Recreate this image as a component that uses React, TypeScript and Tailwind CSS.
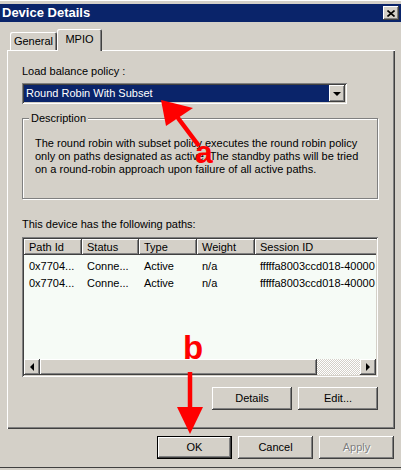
import React from "react";

const raised =
  "shadow-[inset_-1px_-1px_#404040,inset_1px_1px_#ffffff,inset_-2px_-2px_#808080,inset_2px_2px_#d4d0c8]";
const sunken =
  "shadow-[inset_1px_1px_#808080,inset_-1px_-1px_#ffffff,inset_2px_2px_#404040,inset_-2px_-2px_#d4d0c8]";

const columns = [
  { name: "Path Id", w: "w-[58px]" },
  { name: "Status", w: "w-[57px]" },
  { name: "Type", w: "w-[58px]" },
  { name: "Weight", w: "w-[58px]" },
  { name: "Session ID", w: "w-[140px]" },
];

const rows = [
  ["0x7704...", "Conne...", "Active", "n/a", "fffffa8003ccd018-40000"],
  ["0x7704...", "Conne...", "Active", "n/a", "fffffa8003ccd018-40000"],
];

function Button({ label, wide, isDefault, disabled }: { label: string; wide?: boolean; isDefault?: boolean; disabled?: boolean }) {
  return (
    <div
      className={`flex items-center justify-center h-[23px] ${wide ? "w-[80px]" : "w-[75px]"} ${
        isDefault
          ? "border border-black shadow-[inset_-1px_-1px_#404040,inset_1px_1px_#ffffff,inset_-2px_-2px_#808080]"
          : raised
      } ${disabled ? "text-[#808080] [text-shadow:1px_1px_0_#ffffff]" : "text-black"}`}
    >
      {label}
    </div>
  );
}

function Triangle({ dir }: { dir: "left" | "right" | "down" }) {
  const pts = dir === "left" ? "4,0 4,8 0,4" : dir === "right" ? "0,0 0,8 4,4" : "0,0 8,0 4,4";
  const w = dir === "down" ? 8 : 4;
  const h = dir === "down" ? 4 : 8;
  return (
    <svg width={w} height={h} viewBox={`0 0 ${w} ${h}`}>
      <polygon points={pts} fill="#000" />
    </svg>
  );
}

export default function App() {
  return (
    <div className="relative w-[401px] h-[470px] overflow-hidden bg-[#d4d0c8] text-[11px] leading-[13px] text-black font-['Liberation_Sans',sans-serif]">
      {/* window frame top */}
      <div className="h-[4px] shadow-[inset_0_1px_#ffffff]" />

      {/* title bar */}
      <div className="flex items-center justify-between h-[18px] bg-[#0a246a] pl-[2px] pr-[2px]">
        <span className="text-white font-bold text-[13px] leading-[16px]">Device Details</span>
        <div className={`flex items-center justify-center w-[16px] h-[14px] bg-[#d4d0c8] ${raised}`}>
          <svg width="8" height="7" viewBox="0 0 8 7">
            <path d="M0.5 0.5 L7.5 6.5 M7.5 0.5 L0.5 6.5" stroke="#000" strokeWidth="1.6" />
          </svg>
        </div>
      </div>

      <div className="px-[7px] pt-[8px]">
        {/* tabs */}
        <div className="flex items-end h-[20px] pl-[3px]">
          <div className="flex items-center justify-center w-[47px] h-[18px] rounded-t-[2px] shadow-[inset_1px_1px_#ffffff,inset_-1px_0_#404040,inset_-2px_0_#808080]">
            General
          </div>
          <div className="relative z-10 -mb-[1px] flex items-start justify-center pt-[4px] w-[45px] h-[22px] bg-[#d4d0c8] rounded-t-[2px] shadow-[inset_1px_1px_#ffffff,inset_-1px_0_#404040,inset_-2px_0_#808080]">
            MPIO
          </div>
        </div>

        {/* tab panel */}
        <div className="flex flex-col h-[379px] w-[388px] pl-[15px] pr-[16px] pt-[15px] shadow-[inset_1px_1px_#ffffff,inset_-1px_-1px_#404040,inset_-2px_-2px_#808080]">
          <div className="h-[13px]">Load balance policy :</div>

          {/* combo */}
          <div className={`mt-[5px] flex h-[21px] w-[325px] p-[2px] bg-white ${sunken}`}>
            <div className="flex-1 bg-[#0a246a] text-white pl-[2px] flex items-center">Round Robin With Subset</div>
            <div className={`w-[16px] h-[17px] bg-[#d4d0c8] flex items-center justify-center ${raised}`}>
              <Triangle dir="down" />
            </div>
          </div>

          {/* description group */}
          <div className="relative mt-[14px] h-[81px] w-[356px] border border-[#808080] shadow-[inset_1px_1px_#ffffff,1px_1px_#ffffff] pl-[12px] pt-[18px]">
            <span className="absolute left-[6px] -top-[7px] bg-[#d4d0c8] px-[2px]">Description</span>
            <p>
              The round robin with subset policy executes the round robin policy
              <br />
              only on paths designated as active. The standby paths will be tried
              <br />
              on a round-robin approach upon failure of all active paths.
            </p>
          </div>

          <div className="mt-[19px] h-[13px]">This device has the following paths:</div>

          {/* list view */}
          <div className={`mt-[6px] flex flex-col h-[140px] w-[356px] p-[2px] bg-[#f6fbf6] ${sunken}`}>
            <div className="flex-1 overflow-hidden">
              <div className="flex h-[16px] bg-[#d4d0c8]">
                {columns.map((c) => (
                  <div
                    key={c.name}
                    className={`${c.w} shrink-0 pl-[5px] flex items-center shadow-[inset_-1px_-1px_#404040,inset_1px_1px_#ffffff,inset_-2px_-2px_#808080]`}
                  >
                    {c.name}
                  </div>
                ))}
              </div>
              <div className="pt-[3px]">
                {rows.map((r, i) => (
                  <div key={i} className="flex h-[17px] items-center">
                    {r.map((cell, j) => (
                      <div key={j} className={`${columns[j].w} shrink-0 pl-[5px] whitespace-nowrap overflow-hidden`}>
                        {cell}
                      </div>
                    ))}
                  </div>
                ))}
              </div>
            </div>
            {/* horizontal scrollbar */}
            <div className="flex h-[16px]">
              <div className={`w-[16px] flex items-center justify-center bg-[#d4d0c8] ${raised}`}>
                <Triangle dir="left" />
              </div>
              <div className={`w-[277px] bg-[#d4d0c8] ${raised}`} />
              <div className="flex-1 bg-[image:repeating-conic-gradient(#d4d0c8_0%_25%,#ffffff_0%_50%)] bg-[length:2px_2px]" />
              <div className={`w-[16px] flex items-center justify-center bg-[#d4d0c8] ${raised}`}>
                <Triangle dir="right" />
              </div>
            </div>
          </div>

          <div className="mt-[10px] flex justify-end gap-[6px] pr-[1px]">
            <Button label="Details" wide />
            <Button label="Edit..." wide />
          </div>
        </div>

        {/* dialog buttons */}
        <div className="mt-[7px] flex justify-end gap-[6px] pr-[0px]">
          <Button label="OK" isDefault />
          <Button label="Cancel" />
          <Button label="Apply" disabled />
        </div>
      </div>

      <div className="absolute left-0 right-0 bottom-[2px] h-[1px] bg-[#404040]" />

      {/* red annotations */}
      <svg className="absolute inset-0 pointer-events-none" width="401" height="470" viewBox="0 0 401 470">
        <line x1="199" y1="146" x2="175" y2="114" stroke="#ff0000" strokeWidth="4.5" />
        <polygon points="161,100 166,126 193,108" fill="#ff0000" />
        <line x1="190" y1="372" x2="190" y2="410" stroke="#ff0000" strokeWidth="4.5" />
        <polygon points="177,407 203,407 190,434" fill="#ff0000" />
      </svg>
      <span className="absolute left-[195px] top-[136px] text-[#ff0000] font-bold text-[32px] leading-[32px] pointer-events-none">a</span>
      <span className="absolute left-[183px] top-[331px] text-[#ff0000] font-bold text-[33px] leading-[33px] pointer-events-none">b</span>
    </div>
  );
}
